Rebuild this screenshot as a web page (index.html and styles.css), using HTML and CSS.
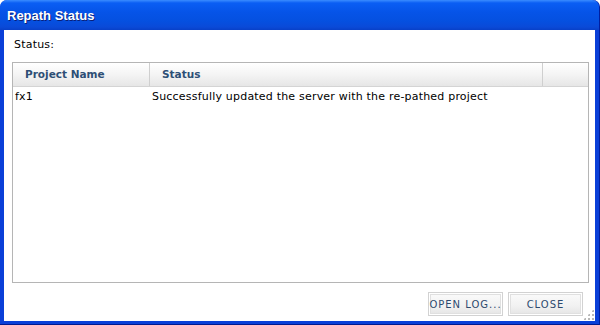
FILE: index.html
```html
<!DOCTYPE html>
<html>
<head>
  <title>Repath Status</title>
  <link rel="stylesheet" href="styles.css">
</head>
<body>
  <div class="window">
    <div class="titlebar">Repath Status</div>
    <div class="client">
      <div class="label">Status:</div>
      <div class="grid">
        <div class="grid-head">
          <div class="col col-name">Project Name</div>
          <div class="col col-status">Status</div>
          <div class="col col-rest"></div>
        </div>
        <div class="grid-row">
          <div class="cell col-name">fx1</div>
          <div class="cell col-status">Successfully updated the server with the re-pathed project</div>
        </div>
      </div>
      <div class="buttons">
        <button class="btn">OPEN LOG...</button>
        <button class="btn">CLOSE</button>
      </div>
      <div class="grip"></div>
    </div>
  </div>
</body>
</html>
```

FILE: styles.css
```css
* {
  margin: 0;
  padding: 0;
  box-sizing: border-box;
}

body {
  width: 600px;
  height: 325px;
  overflow: hidden;
  font-family: "DejaVu Sans", sans-serif;
  font-size: 11px;
  color: #000;
}

.window {
  width: 600px;
  height: 325px;
  display: flex;
  flex-direction: column;
  background: #0a3fd8;
  border-radius: 7px 7px 0 0;
  border-right: 1px solid #001ea0;
  border-bottom: 1px solid #001a90;
}

.titlebar {
  height: 30px;
  flex: none;
  padding: 6px 0 0 7px;
  color: #fff;
  font-family: "Liberation Sans", Arial, sans-serif;
  font-weight: bold;
  font-size: 13px;
  line-height: 20px;
  text-shadow: 1px 1px 0 #0a1f78;
  border-radius: 7px 7px 0 0;
  background: linear-gradient(#3a8cff 0%, #0a5ef4 10%, #0654e8 40%, #0550e0 70%, #0a4ad8 90%, #0840c8 100%);
}

.client {
  flex: 1;
  margin: 0 4px 3px 4px;
  background: #fff;
  position: relative;
  display: flex;
  flex-direction: column;
  padding: 0 6px 0 8px;
}

.label {
  font-size: 11px;
  letter-spacing: 0.2px;
  padding: 8px 0 0 2px;
  height: 32px;
}

.grid {
  height: 221px;
  border: 1px solid #b5b5b5;
  display: flex;
  flex-direction: column;
}

.grid-head {
  height: 24px;
  display: flex;
  border-bottom: 1px solid #d4d4d4;
  background: linear-gradient(#ffffff 0%, #f4f4f4 50%, #e6e6e6 100%);
}

.grid-head .col {
  font-weight: bold;
  font-size: 10.5px;
  color: #2e4f76;
  line-height: 23px;
  border-right: 1px solid #cfcfcf;
}

.col-name {
  width: 137px;
  padding-left: 12px;
  flex: none;
}

.col-status {
  width: 393px;
  padding-left: 12px;
  flex: none;
}

.grid-head .col-rest {
  flex: 1;
  border-right: none;
}

.grid-row {
  display: flex;
  height: 20px;
  line-height: 19px;
}

.cell {
  font-size: 11px;
  letter-spacing: 0.2px;
}

.grid-row .col-name {
  padding-left: 2px;
}

.grid-row .col-status {
  width: auto;
  padding-left: 2px;
}

.buttons {
  display: flex;
  justify-content: flex-end;
  gap: 5px;
  padding: 9px 6px 0 0;
}

.btn {
  width: 75px;
  height: 24px;
  font-family: "DejaVu Sans", sans-serif;
  font-size: 10px;
  letter-spacing: 1px;
  color: #2d4a6e;
  border: 1px solid #d2d2d2;
  box-shadow: inset 0 0 0 1px #fff, inset 0 0 0 2px #e0e0e0;
  background: linear-gradient(#fbfbfb 0%, #f1f1f1 60%, #e4e4e4 100%);
}

.grip {
  position: absolute;
  right: 1px;
  bottom: 1px;
  width: 11px;
  height: 11px;
  background:
    radial-gradient(circle, #b8b8b8 1px, transparent 1.2px) 0 0 / 4px 4px;
  clip-path: polygon(100% 0, 100% 100%, 0 100%);
}
```
